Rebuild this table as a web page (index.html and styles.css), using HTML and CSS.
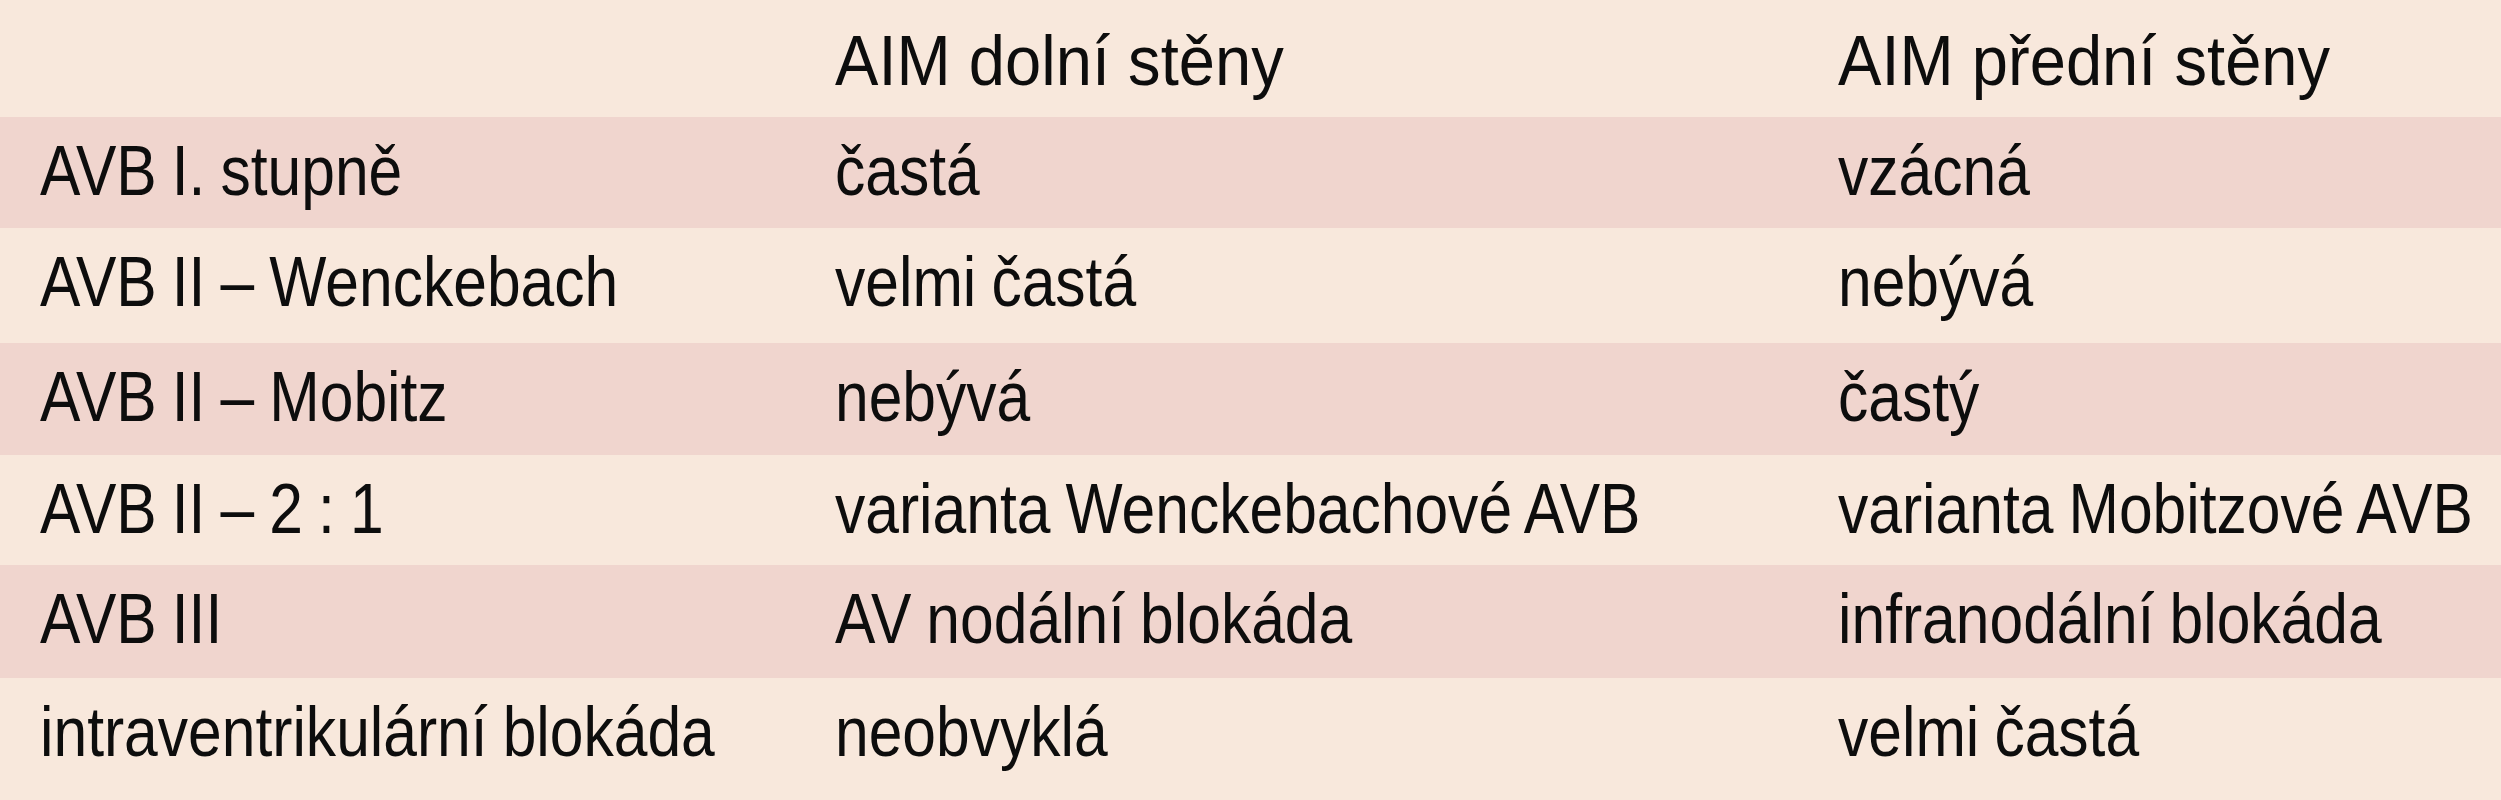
FILE: index.html
```html
<!DOCTYPE html>
<html lang="cs">
<head>
<meta charset="utf-8">
<title>AVB u AIM</title>
<link rel="stylesheet" href="styles.css">
</head>
<body>
<div class="table">
  <div class="row head r0">
    <div class="cell"></div>
    <div class="cell"><span class="t">AIM dolní stěny</span></div>
    <div class="cell"><span class="t">AIM přední stěny</span></div>
  </div>
  <div class="row pink r1">
    <div class="cell"><span class="t">AVB I. stupně</span></div>
    <div class="cell"><span class="t">častá</span></div>
    <div class="cell"><span class="t">vzácná</span></div>
  </div>
  <div class="row r2">
    <div class="cell"><span class="t">AVB II – Wenckebach</span></div>
    <div class="cell"><span class="t">velmi častá</span></div>
    <div class="cell"><span class="t">nebývá</span></div>
  </div>
  <div class="row pink r3">
    <div class="cell"><span class="t">AVB II – Mobitz</span></div>
    <div class="cell"><span class="t">nebývá</span></div>
    <div class="cell"><span class="t">častý</span></div>
  </div>
  <div class="row r4">
    <div class="cell"><span class="t">AVB II – 2 : 1</span></div>
    <div class="cell"><span class="t">varianta Wenckebachové AVB</span></div>
    <div class="cell"><span class="t">varianta Mobitzové AVB</span></div>
  </div>
  <div class="row pink r5">
    <div class="cell"><span class="t">AVB III</span></div>
    <div class="cell"><span class="t">AV nodální blokáda</span></div>
    <div class="cell"><span class="t">infranodální blokáda</span></div>
  </div>
  <div class="row r6">
    <div class="cell"><span class="t">intraventrikulární blokáda</span></div>
    <div class="cell"><span class="t">neobvyklá</span></div>
    <div class="cell"><span class="t">velmi častá</span></div>
  </div>
</div>
</body>
</html>
```

FILE: styles.css
```css
html, body {
  margin: 0;
  padding: 0;
  background: #f8e8dc;
}

body {
  width: 2501px;
  height: 800px;
  overflow: hidden;
  font-family: "Liberation Sans", Arial, sans-serif;
  color: #0d0d0d;
}

.table {
  display: flex;
  flex-direction: column;
  height: 800px;
}

.row {
  display: grid;
  grid-template-columns: 795px 1003px 1fr;
  background: #f8e8dc;
}

.row.pink {
  background: #f0d5ce;
}

.r0 { height: 117px; }
.r1 { height: 111px; }
.r2 { height: 115px; }
.r3 { height: 112px; }
.r4 { height: 110px; }
.r5 { height: 113px; }
.r6 { flex: 1; }

.cell {
  padding: 19px 0 0 40px;
  font-size: 70px;
  line-height: 70px;
  white-space: nowrap;
}

.head .cell {
  padding-top: 26px;
}

.t {
  display: inline-block;
  transform: scaleX(0.865);
  transform-origin: 0 50%;
  word-spacing: -2px;
}

.head .t {
  transform: scaleX(0.93);
  word-spacing: 0;
}
```
